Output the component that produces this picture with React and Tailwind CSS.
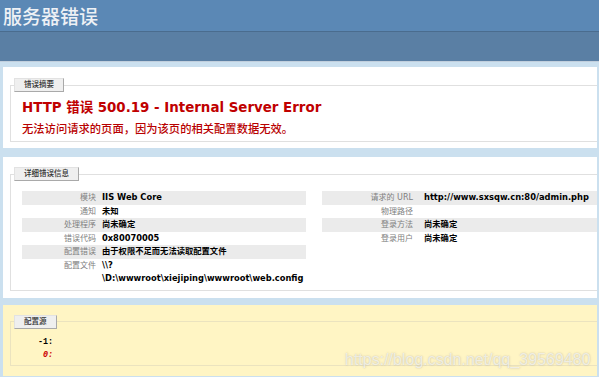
const leftRows = [
  { label: "模块", value: "IIS Web Core", alt: true },
  { label: "通知", value: "未知" },
  { label: "处理程序", value: "尚未确定", alt: true },
  { label: "错误代码", value: "0x80070005" },
  { label: "配置错误", value: "由于权限不足而无法读取配置文件", alt: true },
  { label: "配置文件", value: "\\\\?\n\\D:\\wwwroot\\xiejiping\\wwwroot\\web.config" },
];

const rightRows = [
  { label: "请求的 URL", value: "http://www.sxsqw.cn:80/admin.php", alt: true },
  { label: "物理路径", value: "" },
  { label: "登录方法", value: "尚未确定", alt: true },
  { label: "登录用户", value: "尚未确定" },
];

const Legend = ({ children }) => (
  <legend className="ml-[-8px] px-[9px] h-[14px] leading-[12px] text-[7.5px] font-medium text-[#333] bg-[#efefef] border border-[#e2e2e2] border-r-[#a9a9a9] border-b-[#a9a9a9]">
    {children}
  </legend>
);

const DetailTable = ({ rows, labelWidth, labelPad, className }) => (
  <table className={`border-collapse text-[8.3px] leading-[13.5px] ${className}`}>
    <tbody>
      {rows.map((r) => (
        <tr key={r.label} className={r.alt ? "bg-[#ebebeb]" : ""}>
          <th
            className={`${labelWidth} ${labelPad} p-0 text-right align-top font-normal text-[#808080] whitespace-nowrap text-[8px]`}
          >
            {r.label}
          </th>
          <td className="p-0 align-top font-bold text-black whitespace-pre">{r.value}</td>
        </tr>
      ))}
    </tbody>
  </table>
);

export default function App() {
  return (
    <div className="relative w-[599px] h-[377px] overflow-hidden bg-[#cbe0ef] font-['DejaVu_Sans','Noto_Sans_CJK_SC',sans-serif]">
      <div className="h-[31px] bg-[#5b88b5] pl-[3px]">
        <h1 className="text-[19px] leading-[31px] font-medium text-[#eef1f5] font-['Noto_Sans_CJK_SC',sans-serif]">
          服务器错误
        </h1>
      </div>
      <div className="h-[31px] bg-[#5a7fa4] border-t border-b border-t-[#4a6c8e] border-b-[#c1cfdd]"></div>

      {/* summary */}
      <div className="ml-[3px] mr-[2px] mt-[5px] bg-white pl-[7px] pt-[11px] pb-[6px]">
        <fieldset className="border border-r-0 border-[#e0e0e0] pl-[11px] pt-[7.5px] pb-[6px]">
          <Legend>错误摘要</Legend>
          <h2 className="text-[13.4px] leading-[16px] font-bold text-[#c00000]">
            HTTP 错误 500.19 - Internal Server Error
          </h2>
          <h3 className="mt-[5.5px] text-[11.3px] leading-[14px] font-medium text-[#b80000] font-['Noto_Sans_CJK_SC',sans-serif]">
            无法访问请求的页面，因为该页的相关配置数据无效。
          </h3>
        </fieldset>
      </div>

      {/* details */}
      <div className="ml-[3px] mr-[2px] mt-[9px] bg-white pl-[7px] pt-[10px] pb-[7px]">
        <fieldset className="border border-r-0 border-[#e0e0e0] pl-[11px] pt-[10px] pb-[4px]">
          <Legend>详细错误信息</Legend>
          <div className="flex gap-[16px]">
            <DetailTable rows={leftRows} labelWidth="w-[80px]" labelPad="pr-[6px]" className="w-[284px]" />
            <DetailTable rows={rightRows} labelWidth="w-[102px]" labelPad="pr-[11px]" className="flex-1 self-start" />
          </div>
        </fieldset>
      </div>

      {/* config source */}
      <div className="ml-[3px] mr-[2px] mt-[7px] bg-[#fff5c4] pl-[7px] pt-[10px] pb-[10px]">
        <fieldset className="border border-r-0 border-[#ebe3bf] pl-[11px] pt-[7px] pb-[3px]">
          <Legend>配置源</Legend>
          <pre className="ml-[16px] text-[8.4px] leading-[13px] font-bold font-['Liberation_Mono',monospace]">
            <div className="text-black">-1:</div>
            <div className="text-[#cc0000] italic"> 0:</div>
          </pre>
        </fieldset>
      </div>

      <div className="absolute left-[345px] top-[348px] text-[16px] font-['Liberation_Sans',Arial,sans-serif] text-white/70 [text-shadow:0_0_1.5px_rgba(120,120,120,0.5)] whitespace-nowrap">
        https://blog.csdn.net/qq_39569480
      </div>
    </div>
  );
}
